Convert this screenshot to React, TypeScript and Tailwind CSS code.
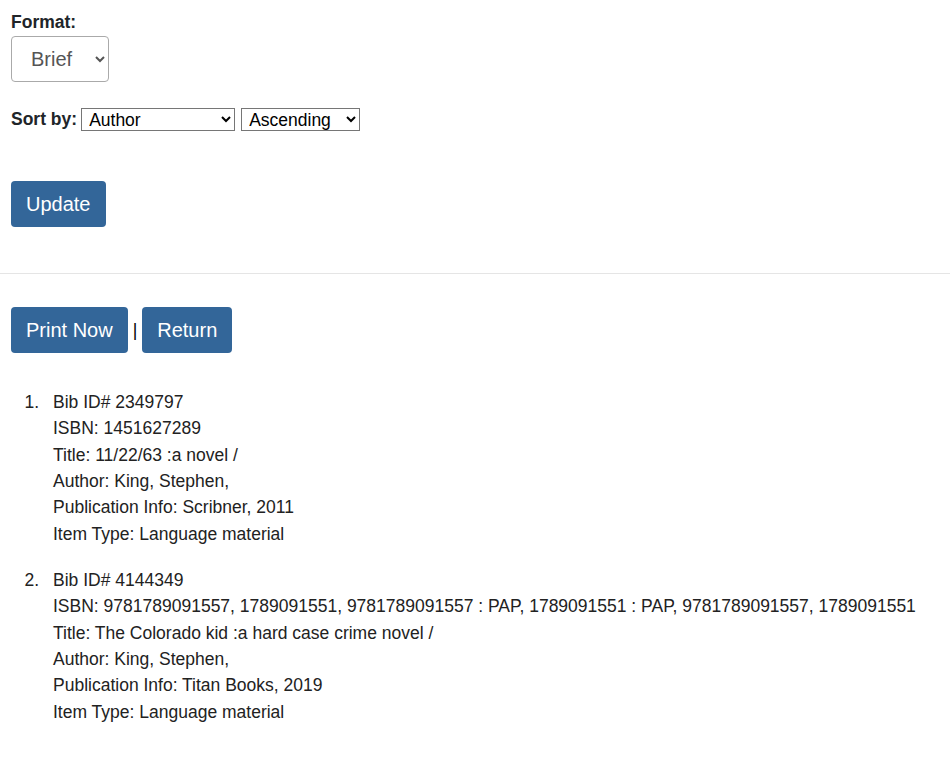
import React from "react";

const records = [
  {
    id: "2349797",
    isbn: "1451627289",
    title: "11/22/63 :a novel /",
    author: "King, Stephen,",
    pub: "Scribner, 2011",
    type: "Language material",
  },
  {
    id: "4144349",
    isbn: "9781789091557, 1789091551, 9781789091557 : PAP, 1789091551 : PAP, 9781789091557, 1789091551",
    title: "The Colorado kid :a hard case crime novel /",
    author: "King, Stephen,",
    pub: "Titan Books, 2019",
    type: "Language material",
  },
];

const btn =
  "h-[46px] px-[15px] rounded-[4px] bg-[#336699] text-white text-[20px] leading-[30px]";

export default function App() {
  return (
    <div className="min-h-screen bg-white text-[#212529] text-[17.5px] leading-[26.4px] font-['Liberation_Sans',Arial,sans-serif]">
      <div className="px-[11px] pt-[9px]">
        <label className="block font-bold">Format:</label>
        <select
          defaultValue="brief"
          className="mt-px w-[98px] h-[46px] pl-[15px] pr-[8px] border border-[#aaaaaa] rounded-[4px] text-[20px] text-[#555555]"
        >
          <option value="brief">Brief</option>
          <option value="full">Full</option>
        </select>

        <div className="mt-[24px] flex items-center">
          <span className="font-bold mr-[4px]">Sort by:</span>
          <select className="w-[154px] h-[23px] border border-[#767676] text-black pl-[3px] leading-[20px]">
            <option>Author</option>
            <option>Title</option>
          </select>
          <select className="ml-[6px] w-[119px] h-[23px] border border-[#767676] text-black pl-[3px] leading-[20px]">
            <option>Ascending</option>
            <option>Descending</option>
          </select>
        </div>

        <button className={`${btn} mt-[48px] block`}>Update</button>
      </div>

      <hr className="mt-[46px] border-t border-[#e5e5e5]" />

      <div className="px-[11px] mt-[33px] flex items-center">
        <button className={btn}>Print Now</button>
        <span className="mx-[5px] text-black">|</span>
        <button className={btn}>Return</button>
      </div>

      <ol className="mt-[36px] pl-[44px] list-decimal text-[#222222]">
        {records.map((r) => (
          <li key={r.id} className="pl-[9px] mb-[19.5px]">
            Bib ID# {r.id}
            <br />
            ISBN: {r.isbn}
            <br />
            Title: {r.title}
            <br />
            Author: {r.author}
            <br />
            Publication Info: {r.pub}
            <br />
            Item Type: {r.type}
          </li>
        ))}
      </ol>
    </div>
  );
}
